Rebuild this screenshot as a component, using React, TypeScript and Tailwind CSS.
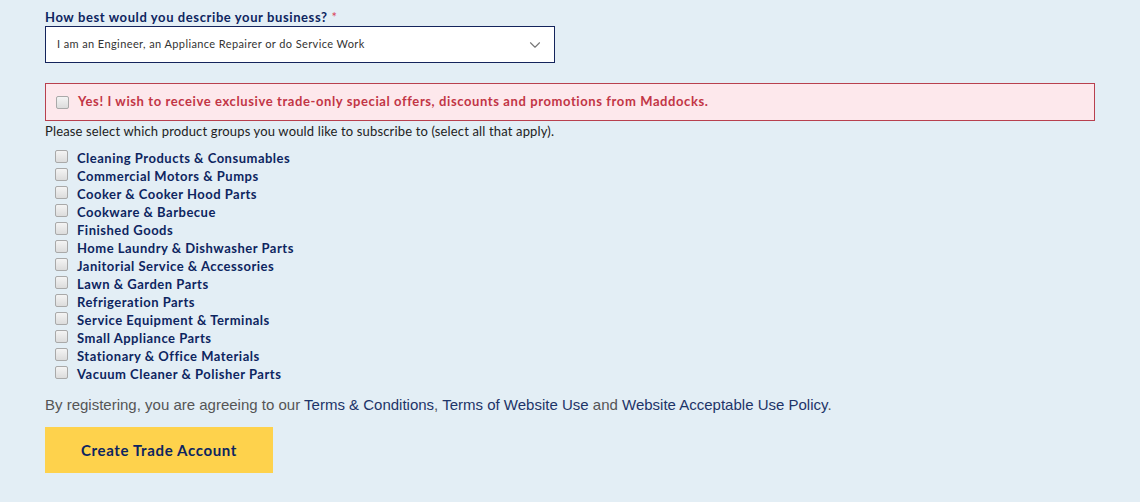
import { ChevronDown } from "lucide-react"

const groups = [
  "Cleaning Products & Consumables",
  "Commercial Motors & Pumps",
  "Cooker & Cooker Hood Parts",
  "Cookware & Barbecue",
  "Finished Goods",
  "Home Laundry & Dishwasher Parts",
  "Janitorial Service & Accessories",
  "Lawn & Garden Parts",
  "Refrigeration Parts",
  "Service Equipment & Terminals",
  "Small Appliance Parts",
  "Stationary & Office Materials",
  "Vacuum Cleaner & Polisher Parts",
]

function Box() {
  return (
    <span className="inline-block w-[13px] h-[13px] rounded-[2px] border border-[#a9a9a9] bg-gradient-to-b from-[#f4f4f4] to-[#dcdcdc] shrink-0" />
  )
}

export default function App() {
  return (
    <main className="min-h-[502px] w-[1140px] bg-[#e3eef5] pl-[45px] pt-[9px] font-['Lato',sans-serif]">
      <label className="block text-[13px] font-bold text-[#0d2560] leading-[16px] tracking-[0.6px]">
        How best would you describe your business? <span className="text-[#d9455a] font-normal">*</span>
      </label>
      <div className="mt-[1px] w-[510px] h-[37px] border border-[#14245c] bg-white flex items-center justify-between pl-[11px] pr-[10px]">
        <span className="text-[11px] text-[#333] tracking-[0.4px]">I am an Engineer, an Appliance Repairer or do Service Work</span>
        <ChevronDown className="w-[18px] h-[18px] text-[#777]" strokeWidth={1.5} />
      </div>

      <div className="mt-[20px] w-[1050px] h-[38px] border border-[#b8404e] bg-[#fde8ec] flex items-center pl-[10px] gap-[9px]">
        <Box />
        <span className="text-[13px] font-bold text-[#c23545] tracking-[0.6px]">
          Yes! I wish to receive exclusive trade-only special offers, discounts and promotions from Maddocks.
        </span>
      </div>
      <p className="text-[13px] text-[#222] leading-[18px] mt-[1px] tracking-[0.15px]">
        Please select which product groups you would like to subscribe to (select all that apply).
      </p>

      <ul className="mt-[9px] pl-[10px]">
        {groups.map(g => (
          <li key={g} className="flex items-center gap-[9px] h-[18px]">
            <span className="-mt-[4px] flex"><Box /></span>
            <span className="text-[13px] font-bold text-[#0d2560] leading-[18px] tracking-[0.5px]">{g}</span>
          </li>
        ))}
      </ul>

      <p className="mt-[13px] text-[15px] text-[#555] font-['Liberation_Sans',Arial,sans-serif] leading-[18px]">
        By registering, you are agreeing to our <a className="text-[#1d3468]">Terms &amp; Conditions</a>,{" "}
        <a className="text-[#1d3468]">Terms of Website Use</a> and{" "}
        <a className="text-[#1d3468]">Website Acceptable Use Policy</a>.
      </p>

      <button className="mt-[13px] w-[228px] h-[46px] bg-[#fed24c] text-[15px] font-bold text-[#0d2560] tracking-[0.65px]">
        Create Trade Account
      </button>
    </main>
  )
}
